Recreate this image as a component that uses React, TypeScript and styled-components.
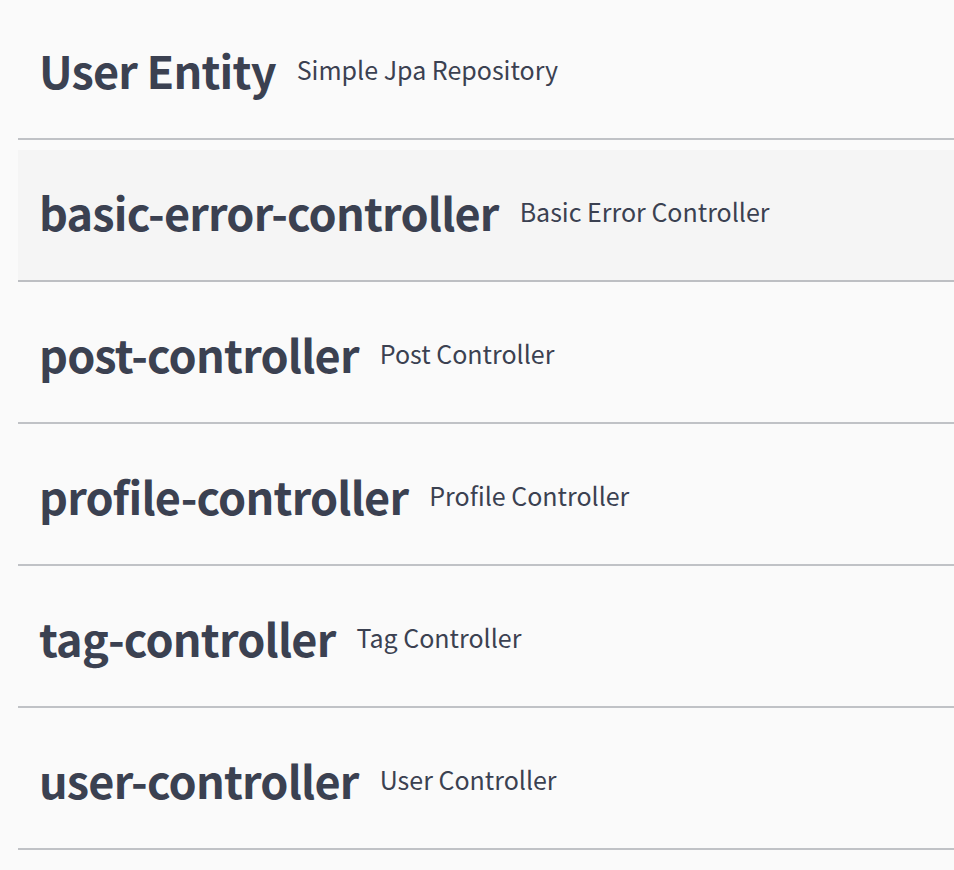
import styled, { createGlobalStyle } from 'styled-components';

const GlobalStyle = createGlobalStyle`
  html, body {
    margin: 0;
    padding: 0;
    background: #fafafa;
  }
  body {
    font-family: "Noto Sans CJK KR", "Noto Sans", sans-serif;
    color: #3b4151;
  }
`;

const Wrapper = styled.div`
  padding: 8px 0 0 18px;
  display: flex;
  flex-direction: column;
`;

const TagSection = styled.div`
  display: flex;
  flex-direction: column;
`;

const TagHeader = styled.h3<{ $active?: boolean }>`
  display: flex;
  align-items: center;
  box-sizing: border-box;
  height: 132px;
  margin: 0 0 10px;
  padding: 0 40px 8px 21px;
  border-bottom: 2px solid rgba(59, 65, 81, 0.3);
  background: ${(props) => (props.$active ? 'rgba(0, 0, 0, 0.02)' : 'transparent')};
  cursor: pointer;
`;

const TagName = styled.span`
  font-size: 45px;
  font-weight: 700;
  letter-spacing: -0.8px;
  white-space: nowrap;
`;

const TagDescription = styled.small`
  flex: 1;
  padding: 0 21px;
  font-size: 25px;
  font-weight: 400;
  white-space: nowrap;
`;

interface ITag {
  name: string;
  description: string;
}

const tags: ITag[] = [
  { name: 'User Entity', description: 'Simple Jpa Repository' },
  { name: 'basic-error-controller', description: 'Basic Error Controller' },
  { name: 'post-controller', description: 'Post Controller' },
  { name: 'profile-controller', description: 'Profile Controller' },
  { name: 'tag-controller', description: 'Tag Controller' },
  { name: 'user-controller', description: 'User Controller' },
];

const App = () => {
  return (
    <>
      <GlobalStyle />
      <Wrapper>
        {tags.map((tag, i) => (
          <TagSection key={tag.name}>
            <TagHeader $active={i === 1}>
              <TagName>{tag.name}</TagName>
              <TagDescription>{tag.description}</TagDescription>
            </TagHeader>
          </TagSection>
        ))}
      </Wrapper>
    </>
  );
};

export default App;
